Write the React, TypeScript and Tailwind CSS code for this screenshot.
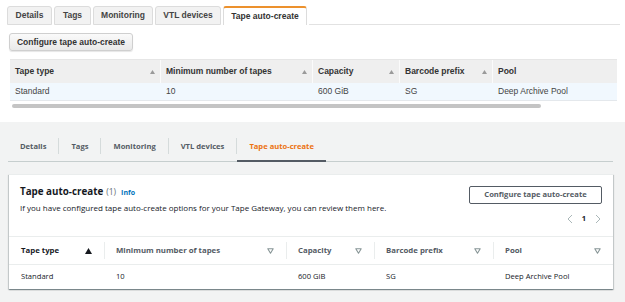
import React from "react";

const topCols = [
  { label: "Tape type", w: "w-[151px]" },
  { label: "Minimum number of tapes", w: "w-[152px]" },
  { label: "Capacity", w: "w-[87px]" },
  { label: "Barcode prefix", w: "w-[93px]" },
  { label: "Pool", w: "flex-1" },
];
const rowVals = ["Standard", "10", "600 GiB", "SG", "Deep Archive Pool"];

function SortUp({ className }: { className?: string }) {
  return (
    <svg width="5" height="4" viewBox="0 0 5 4" className={className}>
      <path d="M0 4 L2.5 0 L5 4 Z" fill="currentColor" />
    </svg>
  );
}

function Caret({ filled }: { filled?: boolean }) {
  return filled ? (
    <svg width="7" height="6" viewBox="0 0 7 6" className="text-[#16191f]">
      <path d="M0 6 L3.5 0 L7 6 Z" fill="currentColor" />
    </svg>
  ) : (
    <svg width="7" height="6" viewBox="0 0 7 6" className="text-[#879596]">
      <path d="M0.8 0.8 L6.2 0.8 L3.5 5.2 Z" fill="none" stroke="currentColor" strokeWidth="1.1" strokeLinejoin="round" />
    </svg>
  );
}

export default function App() {
  const topTabs = [
    { label: "Details", w: "w-[45px]" },
    { label: "Tags", w: "w-[37px]" },
    { label: "Monitoring", w: "w-[60px]" },
    { label: "VTL devices", w: "w-[66px]" },
  ];
  const botTabs = ["Details", "Tags", "Monitoring", "VTL devices"];
  const botCols = [
    { label: "Tape type", sorted: true },
    { label: "Minimum number of tapes" },
    { label: "Capacity" },
    { label: "Barcode prefix" },
    { label: "Pool" },
  ];
  return (
    <div className="w-[625px] h-[302px] overflow-hidden bg-white">
      {/* Top (legacy) section */}
      <div className="h-[122px] bg-white font-['Liberation_Sans',Arial,sans-serif]">
        <div className="flex items-end pt-[6px] pl-[7px] gap-[2px] h-[25px]">
          {topTabs.map((t) => (
            <div
              key={t.label}
              className={`${t.w} h-[19px] flex items-center justify-center rounded-t-[3px] border border-[#dcdcdc] bg-[#f2f2f2] text-[8.5px] font-bold text-[#444]`}
            >
              {t.label}
            </div>
          ))}
          <div className="w-[84px] h-[19px] flex items-center justify-center rounded-t-[3px] border-x border-[#dcdcdc] border-t-2 border-t-[#ec912d] bg-white text-[8.5px] font-bold text-[#333]">
            Tape auto-create
          </div>
          <div className="flex-1 mr-[5px] border-b border-[#e2e2e2]" />
        </div>
        <div className="mt-[8px] ml-[9px] w-[124px] h-[18px] flex items-center justify-center rounded-[3px] border border-[#cfcfcf] bg-gradient-to-b from-[#fafafa] to-[#e9e9e9] shadow-[0_1px_1px_rgba(0,0,0,0.1)] text-[8.5px] font-bold text-[#333]">
          Configure tape auto-create
        </div>
        <div className="mt-[8px] ml-[10px] w-[607px] border-t border-[#e6e6e6]">
          <div className="flex h-[23px] bg-[#efefef]">
            {topCols.map((c, i) => (
              <div
                key={c.label}
                className={`${c.w} flex items-center justify-between pl-[5px] pr-[5px] text-[8.5px] font-bold text-[#333] ${i < 4 ? "border-r border-[#fbfbfb]" : ""}`}
              >
                <span>{c.label}</span>
                {i < 4 && <SortUp className="text-[#9a9a9a]" />}
              </div>
            ))}
          </div>
          <div className="flex h-[18px] bg-[#f1f8fe] border-b border-[#e4e8ec]">
            {topCols.map((c, i) => (
              <div
                key={c.label}
                className={`${c.w} flex items-center pl-[5px] text-[8.5px] text-[#444] ${i < 4 ? "border-r border-transparent" : ""}`}
              >
                {rowVals[i]}
              </div>
            ))}
          </div>
        </div>
        <div className="mt-[3px] ml-[12px] w-[529px] h-[4px] rounded-full bg-[#c4c4c4]" />
      </div>

      {/* Bottom (new console) section */}
      <div className="h-[180px] bg-[#f2f3f3] pt-[9px] font-['Open_Sans',sans-serif]">
        <div className="mx-[8px] w-[605px] flex items-center h-[31px] border-b border-[#c6cece]">
          {botTabs.map((t) => (
            <React.Fragment key={t}>
              <div className="px-[12px] pt-[1px] text-[7.6px] font-bold text-[#545b64]">{t}</div>
              <div className="w-px h-[16px] bg-[#d5dbdb]" />
            </React.Fragment>
          ))}
          <div className="relative h-full flex items-center px-[12px] pt-[1px] text-[7.6px] font-bold text-[#ec7211]">
            Tape auto-create
            <span className="absolute left-0 right-0 bottom-[-1px] h-[2px] bg-[#545b64]" />
          </div>
        </div>

        <div className="mt-[12px] ml-[9px] w-[604px] h-[115px] bg-white border-t border-[#eaeded] shadow-[0_1px_1px_0_rgba(0,28,36,0.3),1px_1px_1px_0_rgba(0,28,36,0.15),-1px_1px_1px_0_rgba(0,28,36,0.15)]">
          <div className="h-[61px] flex justify-between pl-[11px] pr-[11px] pt-[10px]">
            <div className="flex flex-col">
              <div className="flex items-baseline h-[14px] leading-[14px]">
                <span className="text-[9.8px] font-bold text-[#16191f]">Tape auto-create</span>
                <span className="ml-[3px] text-[8.5px] text-[#687078]">(1)</span>
                <span className="ml-[5px] text-[7px] font-bold text-[#0073bb]">Info</span>
              </div>
              <div className="mt-[3px] text-[8px] leading-[11px] text-[#16191f]">
                If you have configured tape auto-create options for your Tape Gateway, you can review them here.
              </div>
            </div>
            <div className="flex flex-col items-end">
              <div className="mt-[1px] w-[133px] h-[18px] flex items-center justify-center rounded-[2px] border border-[#545b64] text-[7.6px] font-bold text-[#545b64]">
                Configure tape auto-create
              </div>
              <div className="mt-[9px] flex items-center h-[12px] gap-[9px] pr-[1px]">
                <svg width="6" height="10" viewBox="0 0 6 10">
                  <path d="M5 1 L1 5 L5 9" fill="none" stroke="#aab7b8" strokeWidth="1" />
                </svg>
                <span className="text-[7.5px] font-bold text-[#16191f]">1</span>
                <svg width="6" height="10" viewBox="0 0 6 10">
                  <path d="M1 1 L5 5 L1 9" fill="none" stroke="#aab7b8" strokeWidth="1" />
                </svg>
              </div>
            </div>
          </div>
          <div className="grid grid-cols-[95px_1px_181px_1px_87px_1px_118px_1px_1fr] h-[29px] items-center border-t border-b border-[#eaeded]">
            {botCols.map((c, i) => (
              <React.Fragment key={c.label}>
                <div
                  className={`flex items-center justify-between ${i === 0 ? "pl-[12px]" : "pl-[11px]"} pr-[12px] text-[7.8px] font-bold ${c.sorted ? "text-[#16191f]" : "text-[#545b64]"}`}
                >
                  <span>{c.label}</span>
                  <Caret filled={c.sorted} />
                </div>
                {i < 4 && <div className="w-px h-[17px] bg-[#eaeded]" />}
              </React.Fragment>
            ))}
          </div>
          <div className="grid grid-cols-[95px_1px_181px_1px_87px_1px_118px_1px_1fr] h-[24px] items-center">
            {rowVals.map((v, i) => (
              <React.Fragment key={i}>
                <div className={`${i === 0 ? "pl-[12px]" : "pl-[11px]"} text-[7.6px] text-[#16191f]`}>{v}</div>
                {i < 4 && <div />}
              </React.Fragment>
            ))}
          </div>
        </div>
      </div>
    </div>
  );
}
